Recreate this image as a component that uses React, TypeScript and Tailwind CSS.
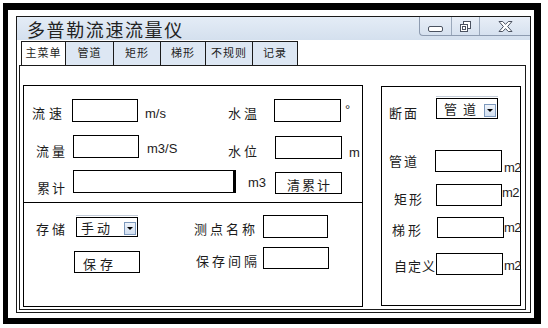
import React from "react";

const CJK = "font-['Noto_Sans_CJK_SC',sans-serif] text-[13px] leading-[13px] text-[#1c1c1c] shrink-0 whitespace-nowrap";
const UNIT = "font-['Liberation_Sans',Arial,sans-serif] text-[13px] leading-[13px] text-[#1c1c1c] shrink-0 whitespace-nowrap";
const M2 = "font-['Liberation_Sans_Narrow','Liberation_Sans',sans-serif] text-[13px] leading-[13px] tracking-[-0.5px] text-[#1c1c1c] shrink-0 whitespace-nowrap";

function Arrow() {
  return (
    <div className="w-[12px] h-[13px] mr-[1px] mb-[1px] shrink-0 bg-[linear-gradient(to_bottom,#eef3fa,#d2dff0)] border border-[#7d99bd] flex items-center justify-center">
      <div className="w-0 h-0 border-l-[3px] border-r-[3px] border-t-[3px] border-l-transparent border-r-transparent border-t-black" />
    </div>
  );
}

function Dropdown({ text, w, h, textCls }: { text: string; w: string; h: string; textCls: string }) {
  return (
    <div className={`flex flex-col shrink-0 ${w}`}>
      <div className="h-[1px] bg-[#c3ccd8]" />
      <div className={`mt-[1px] ${h} border border-black bg-white flex items-end justify-between`}>
        <div className={`${CJK} ${textCls}`}>{text}</div>
        <Arrow />
      </div>
    </div>
  );
}

export default function App() {
  return (
    <div className="w-[548px] h-[328px] bg-white pt-[3px] pl-[3px]">
      <div className="w-[538px] h-[321px] bg-black pt-[7px] pl-[5px] pr-[7px] pb-[6px]">
        <div className="w-full h-full bg-white pt-[6px] pl-[8px]">
          {/* window */}
          <div className="w-[515px] h-[297px] border border-[#1a1a1a] flex flex-col bg-white">
            {/* title bar */}
            <div className="h-[23px] shrink-0 flex justify-between bg-[linear-gradient(to_bottom,#e4ecf6,#d4e0ee)]">
              <div className="pl-[10px] pt-[3px] font-['Noto_Sans_CJK_SC',sans-serif] text-[18px] leading-[18px] tracking-[1.6px] text-[#222]">
                多普勒流速流量仪
              </div>
              <div className="w-[111px] h-[19px] flex border-l border-b border-[#8d9bb0] rounded-bl-[4px] bg-[linear-gradient(to_bottom,#e8eef7,#d6e1ef)]">
                <div className="w-[32px] border-r border-[#9aa8bb] flex items-center justify-center pt-[5px]">
                  <svg width="15" height="6" viewBox="0 0 15 6">
                    <rect x="0.5" y="0.5" width="14" height="5" rx="1.5" fill="white" stroke="#4b5260" />
                  </svg>
                </div>
                <div className="w-[28px] border-r border-[#9aa8bb] flex items-center justify-center">
                  <svg width="11" height="11" viewBox="0 0 11 11">
                    <rect x="3.5" y="0.5" width="7" height="7" fill="white" stroke="#4b5260" />
                    <rect x="0.5" y="3.5" width="7" height="7" fill="white" stroke="#4b5260" />
                    <rect x="2.5" y="5.5" width="3" height="3" fill="white" stroke="#4b5260" />
                  </svg>
                </div>
                <div className="flex-1 flex items-center justify-center">
                  <svg width="15" height="11" viewBox="0 0 15 11">
                    <path
                      d="M1 0.5 L4.7 0.5 L7.5 3.4 L10.3 0.5 L14 0.5 L9.6 5.5 L14 10.5 L10.3 10.5 L7.5 7.6 L4.7 10.5 L1 10.5 L5.4 5.5 Z"
                      fill="white"
                      stroke="#4b5260"
                    />
                  </svg>
                </div>
              </div>
            </div>

            {/* tabs */}
            <div className="h-[25px] shrink-0 flex pl-[4px] pt-[1px]">
              {[
                { t: "主菜单", w: "w-[44px]", sel: true },
                { t: "管道", w: "w-[48px]" },
                { t: "矩形", w: "w-[47px]" },
                { t: "梯形", w: "w-[45px]" },
                { t: "不规则", w: "w-[47px]" },
                { t: "记录", w: "w-[46px]", last: true },
              ].map((tab) => (
                <div
                  key={tab.t}
                  className={`${tab.w} h-[24px] border-t border-l border-[#1a1a1a] ${tab.last ? "border-r" : ""} ${
                    tab.sel ? "bg-white" : "bg-[#dde7f3]"
                  } flex justify-center pt-[5px] font-['Noto_Sans_CJK_SC',sans-serif] text-[11px] leading-[11px] tracking-[1px] text-[#1c1c1c]`}
                >
                  {tab.t}
                </div>
              ))}
            </div>

            {/* tab page */}
            <div className="ml-[2px] w-[507px] h-[245px] shrink-0 border border-[#1a1a1a] flex items-start pl-[3px] pt-[19px]">
              {/* left panel */}
              <div className="w-[340px] h-[222px] shrink-0 border border-black flex flex-col">
                {/* top section */}
                <div className="h-[117px] shrink-0 border-b border-black pt-[13px] flex flex-col">
                  <div className="flex items-start h-[23px]">
                    <div className={`${CJK} ml-[8px] w-[40px] mt-[7px] tracking-[4px]`}>流速</div>
                    <div className="w-[66px] h-[23px] border border-black shrink-0" />
                    <div className={`${UNIT} ml-[7px] w-[76px] mt-[8px]`}>m/s</div>
                    <div className={`${CJK} ml-[7px] w-[46px] mt-[7px] tracking-[3px]`}>水温</div>
                    <div className="w-[67px] h-[23px] border border-black shrink-0" />
                    <div className={`${UNIT} ml-[4px] mt-[4px] text-[11px]`}>°</div>
                  </div>
                  <div className="flex items-start h-[23px] mt-[13px]">
                    <div className={`${CJK} ml-[12px] w-[37px] mt-[9px] tracking-[3px]`}>流量</div>
                    <div className="w-[66px] h-[23px] border border-black shrink-0" />
                    <div className={`${UNIT} ml-[8px] w-[73px] mt-[7px]`}>m3/S</div>
                    <div className={`${CJK} ml-[8px] w-[47px] mt-[9px] tracking-[3px]`}>水位</div>
                    <div className="w-[67px] h-[23px] mt-[1px] border border-black shrink-0" />
                    <div className={`${UNIT} ml-[7px] mt-[11px]`}>m</div>
                  </div>
                  <div className="flex items-start h-[23px] mt-[12px]">
                    <div className={`${CJK} ml-[13px] w-[36px] mt-[11px] tracking-[2px]`}>累计</div>
                    <div className="w-[163px] h-[23px] border border-black border-r-[3px] shrink-0" />
                    <div className={`${UNIT} ml-[12px] w-[27px] mt-[6px]`}>m3</div>
                    <div className="w-[67px] h-[22px] mt-[2px] border border-black shrink-0 flex items-center justify-center">
                      <div className={`${CJK} tracking-[2px] mt-[2px] pl-[2px]`}>清累计</div>
                    </div>
                  </div>
                </div>
                {/* bottom section */}
                <div className="flex-1 pt-[12px] flex flex-col">
                  <div className="flex items-start h-[23px]">
                    <div className={`${CJK} ml-[12px] w-[40px] mt-[7px] tracking-[3px]`}>存储</div>
                    <Dropdown text="手动" w="w-[62px]" h="h-[20px]" textCls="pl-[4px] mb-[2px] tracking-[3px]" />
                    <div className={`${CJK} ml-[56px] w-[69px] mt-[7px] tracking-[3px]`}>测点名称</div>
                    <div className="w-[65px] h-[23px] border border-black shrink-0" />
                  </div>
                  <div className="flex items-start h-[26px] mt-[9px]">
                    <div className="ml-[50px] mt-[4px] w-[66px] h-[22px] border border-black shrink-0 flex items-center pl-[8px]">
                      <div className={`${CJK} tracking-[4px] mt-[2px]`}>保存</div>
                    </div>
                    <div className={`${CJK} ml-[56px] w-[67px] mt-[7px] tracking-[3px]`}>保存间隔</div>
                    <div className="w-[66px] h-[22px] border border-black shrink-0" />
                  </div>
                </div>
              </div>

              {/* right panel */}
              <div className="ml-[18px] mt-[1px] w-[140px] h-[220px] shrink-0 border border-black pt-[9px] flex flex-col">
                <div className="flex items-start h-[22px]">
                  <div className={`${CJK} ml-[7px] w-[47px] mt-[10px] tracking-[2px]`}>断面</div>
                  <Dropdown text="管道" w="w-[62px]" h="h-[21px]" textCls="pl-[7px] mb-[3px] tracking-[6px]" />
                </div>
                <div className="flex items-start h-[22px] mt-[32px]">
                  <div className={`${CJK} ml-[7px] w-[46px] mt-[4px] tracking-[2px]`}>管道</div>
                  <div className="w-[67px] h-[22px] border border-black shrink-0" />
                  <div className={`${M2} ml-[2px] mt-[11px]`}>m2</div>
                </div>
                <div className="flex items-start h-[22px] mt-[12px]">
                  <div className={`${CJK} ml-[12px] w-[42px] mt-[8px] tracking-[2px]`}>矩形</div>
                  <div className="w-[66px] h-[22px] border border-black shrink-0" />
                  <div className={`${M2} mt-[2px]`}>m2</div>
                </div>
                <div className="flex items-start h-[21px] mt-[11px]">
                  <div className={`${CJK} ml-[10px] w-[45px] mt-[6px] tracking-[3px]`}>梯形</div>
                  <div className="w-[67px] h-[21px] border border-black shrink-0" />
                  <div className={`${M2} mt-[4px]`}>m2</div>
                </div>
                <div className="flex items-start h-[22px] mt-[15px]">
                  <div className={`${CJK} ml-[12px] w-[42px] mt-[6px] tracking-[1px]`}>自定义</div>
                  <div className="w-[67px] h-[22px] border border-black shrink-0" />
                  <div className={`${M2} ml-[1px] mt-[6px]`}>m2</div>
                </div>
              </div>
            </div>
          </div>
        </div>
      </div>
    </div>
  );
}
